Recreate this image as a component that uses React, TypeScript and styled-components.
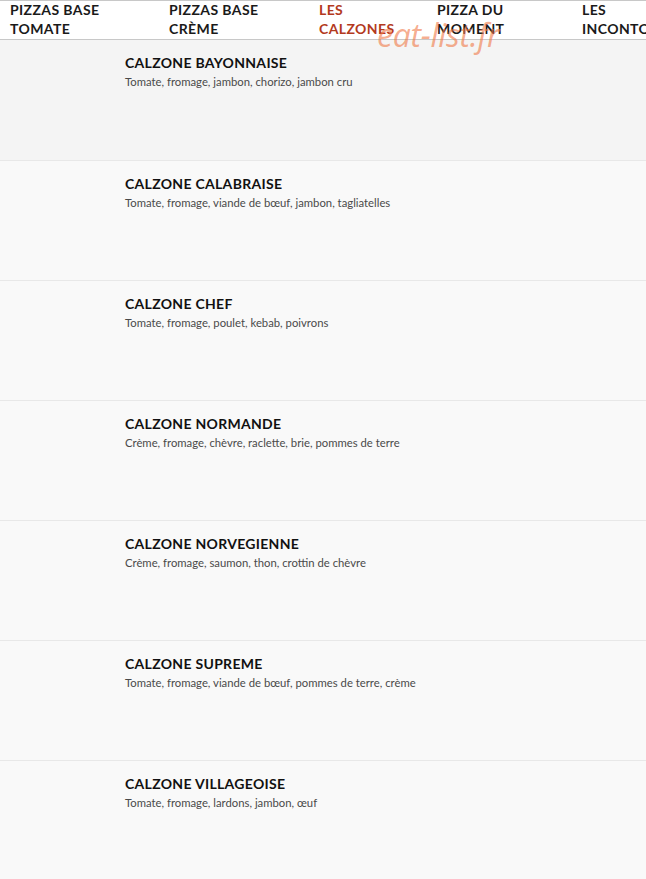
import React from 'react';
import styled, { createGlobalStyle } from 'styled-components';

type Item = {
    name: string;
    desc: string;
}

const tabs = [
    'PIZZAS BASE TOMATE',
    'PIZZAS BASE CRÈME',
    'LES CALZONES',
    'PIZZA DU MOMENT',
    'LES INCONTOURNABLES',
];

const tabWidths = [159, 150, 118, 145, 100];

const items: Item[] = [
    { name: 'CALZONE BAYONNAISE', desc: 'Tomate, fromage, jambon, chorizo, jambon cru' },
    { name: 'CALZONE CALABRAISE', desc: 'Tomate, fromage, viande de bœuf, jambon, tagliatelles' },
    { name: 'CALZONE CHEF', desc: 'Tomate, fromage, poulet, kebab, poivrons' },
    { name: 'CALZONE NORMANDE', desc: 'Crème, fromage, chèvre, raclette, brie, pommes de terre' },
    { name: 'CALZONE NORVEGIENNE', desc: 'Crème, fromage, saumon, thon, crottin de chèvre' },
    { name: 'CALZONE SUPREME', desc: 'Tomate, fromage, viande de bœuf, pommes de terre, crème' },
    { name: 'CALZONE VILLAGEOISE', desc: 'Tomate, fromage, lardons, jambon, œuf' },
];

export default function App() {
    return (
        <Page>
            <GlobalStyle />
            <NavBar>
                {tabs.map((t, i) => (
                    <Tab key={t} $active={i === 2} $width={tabWidths[i]}>{t}</Tab>
                ))}
            </NavBar>
            {/* site watermark laid over the menu */}
            <Watermark>eat-list.fr</Watermark>
            <List>
                {items.map((item, i) => (
                    <Row key={item.name} $first={i === 0}>
                        <Title>{item.name}</Title>
                        <Desc>{item.desc}</Desc>
                    </Row>
                ))}
            </List>
        </Page>
    );
}

const GlobalStyle = createGlobalStyle`
    body {
        margin: 0;
        background: #f9f9f9;
        font-family: Lato, "Open Sans", sans-serif;
    }
`

const Page = styled.div`
    position: relative;
    width: 646px;
    height: 879px;
    overflow: hidden;
`

const NavBar = styled.nav`
    display: flex;
    height: 38px;
    padding-left: 10px;
    background: #fff;
    border-top: 1px solid #c8c8c8;
    border-bottom: 1px solid #c8c8c8;
    overflow: hidden;
`

const Tab = styled.div<{ $active: boolean; $width: number }>`
    flex: 0 0 ${p => p.$width}px;
    padding-right: 20px;
    box-sizing: border-box;
    font-size: 14px;
    font-weight: 700;
    line-height: 19px;
    letter-spacing: 0.4px;
    color: ${p => p.$active ? '#b33a1e' : '#1a1a1a'};
    margin-top: -1px;
`

const Watermark = styled.div`
    position: absolute;
    left: 377px;
    top: 13px;
    font-family: "Open Sans", sans-serif;
    font-style: italic;
    font-size: 32px;
    letter-spacing: -0.3px;
    color: rgba(240, 120, 70, 0.6);
    pointer-events: none;
`

const List = styled.div`
    display: flex;
    flex-direction: column;
`

const Row = styled.div<{ $first: boolean }>`
    height: 120px;
    box-sizing: border-box;
    padding: 14px 0 0 125px;
    background: ${p => p.$first ? '#f4f4f4' : '#f9f9f9'};
    border-top: ${p => p.$first ? 'none' : '1px solid #e8e8e8'};
`

const Title = styled.div`
    font-size: 14px;
    font-weight: 700;
    line-height: 18px;
    letter-spacing: 0.3px;
    color: #111;
`

const Desc = styled.div`
    margin-top: 3px;
    font-size: 11.3px;
    line-height: 14px;
    color: #4a4a4a;
`
